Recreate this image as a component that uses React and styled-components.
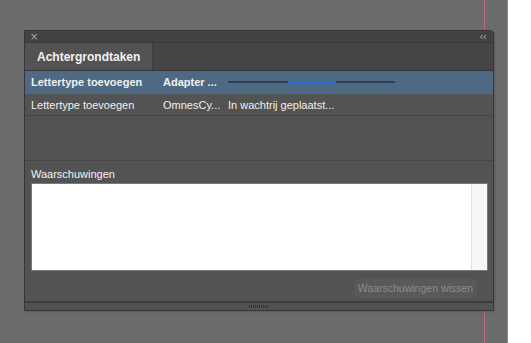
import React from "react";
import styled, { createGlobalStyle } from "styled-components";

const GlobalStyle = createGlobalStyle`
  html, body {
    margin: 0;
    padding: 0;
    background: #ffffff;
  }
  body {
    font-family: "Liberation Sans", Arial, sans-serif;
    font-size: 11px;
  }
`;

const Page = styled.div`
  display: flex;
  width: 531px;
  height: 343px;
  overflow: hidden;
`;

const Canvas = styled.div`
  position: relative;
  width: 508px;
  height: 343px;
  background: #6b6b6b;
  border-right: 1px solid #8c8c8c;
  padding: 30px 0 0 24px;
  box-sizing: border-box;
`;

const WhiteArea = styled.div`
  flex: 1;
  background: #ffffff;
`;

const Guide = styled.div`
  position: absolute;
  left: 484px;
  top: 0;
  bottom: 0;
  width: 1px;
  background: #c46a7e;
`;

const Panel = styled.div`
  position: relative;
  z-index: 1;
  width: 470px;
  height: 281px;
  box-sizing: border-box;
  border: 1px solid #363636;
  border-radius: 0 4px 0 0;
  background: #535353;
  display: flex;
  flex-direction: column;
  overflow: hidden;
  box-shadow: 1px 1px 2px rgba(0, 0, 0, 0.15);
`;

const TitleBar = styled.div`
  height: 11px;
  flex: none;
  background: #424242;
  display: flex;
  align-items: center;
  justify-content: space-between;
  padding: 0 7px 0 5px;
  color: #a8a8a8;
  line-height: 11px;
  border-bottom: 1px solid #3a3a3a;
`;

const Glyph = styled.span`
  font-family: "DejaVu Sans", sans-serif;
  font-size: ${(p) => p.size || 10}px;
  letter-spacing: -1px;
`;

const TabStrip = styled.div`
  height: 27px;
  flex: none;
  background: #454545;
  display: flex;
  border-bottom: 1px solid #383838;
`;

const Tab = styled.div`
  width: 128px;
  background: #535353;
  color: #f2f2f2;
  font-weight: bold;
  font-size: 12px;
  display: flex;
  align-items: center;
  padding: 1px 0 0 12px;
  box-sizing: border-box;
  border-right: 1px solid #3e3e3e;
`;

const List = styled.div`
  height: 89px;
  flex: none;
  border-bottom: 1px solid #474747;
  display: flex;
  flex-direction: column;
`;

const Row = styled.div`
  height: ${(p) => (p.active ? 22 : 21)}px;
  display: grid;
  grid-template-columns: 132px 65px 1fr;
  align-items: center;
  padding-left: 6px;
  background: ${(p) => (p.active ? "#4e6984" : "transparent")};
  color: #f0f0f0;
  font-weight: ${(p) => (p.active ? "bold" : "normal")};
  border-bottom: 1px solid ${(p) => (p.active ? "#4e6984" : "#474747")};
  white-space: nowrap;
`;

const Progress = styled.div`
  position: relative;
  width: 167px;
  height: 2px;
  background: #363e48;
`;

const ProgressFill = styled.div`
  position: absolute;
  top: 0;
  height: 2px;
  background: #1f6fd6;
`;

const Warnings = styled.div`
  flex: 1;
  display: flex;
  flex-direction: column;
  padding: 5px 5px 0 6px;
`;

const Label = styled.div`
  color: #f2f2f2;
  height: 16px;
  line-height: 16px;
  margin-bottom: 1px;
`;

const TextBox = styled.div`
  height: 86px;
  background: #ffffff;
  border: 1px solid #7a7a7a;
  display: flex;
  justify-content: flex-end;
`;

const ScrollLane = styled.div`
  width: 15px;
  background: #f6f6f6;
  border-left: 1px solid #e2e2e2;
`;

const ButtonRow = styled.div`
  display: flex;
  justify-content: flex-end;
  padding: 8px 11px 0 0;
`;

const Button = styled.div`
  height: 19px;
  line-height: 19px;
  padding: 0 4px;
  border-radius: 4px;
  background: #595959;
  color: #8c8c8c;
  font-size: 10.5px;
`;

const Footer = styled.div`
  height: 7px;
  flex: none;
  border-top: 2px solid #3c3c3c;
  background: #525252;
  display: flex;
  justify-content: center;
  align-items: center;
`;

const Grip = styled.div`
  width: 20px;
  height: 3px;
  background: repeating-linear-gradient(
    to right,
    #333333 0,
    #333333 1px,
    transparent 1px,
    transparent 2px
  );
`;

export default function App() {
  return (
    <Page>
      <GlobalStyle />
      <Canvas>
        <Guide />
        <Panel>
          <TitleBar>
            <Glyph size={10}>×</Glyph>
            <Glyph size={11}>‹‹</Glyph>
          </TitleBar>
          <TabStrip>
            <Tab>Achtergrondtaken</Tab>
          </TabStrip>
          <List>
            <Row active>
              <span>Lettertype toevoegen</span>
              <span>Adapter ...</span>
              <Progress>
                <ProgressFill style={{ left: "60px", width: "48px" }} />
              </Progress>
            </Row>
            <Row>
              <span>Lettertype toevoegen</span>
              <span>OmnesCy...</span>
              <span>In wachtrij geplaatst...</span>
            </Row>
          </List>
          <Warnings>
            <Label>Waarschuwingen</Label>
            <TextBox>
              <ScrollLane />
            </TextBox>
            <ButtonRow>
              <Button>Waarschuwingen wissen</Button>
            </ButtonRow>
          </Warnings>
          <Footer>
            <Grip />
          </Footer>
        </Panel>
      </Canvas>
      <WhiteArea />
    </Page>
  );
}
